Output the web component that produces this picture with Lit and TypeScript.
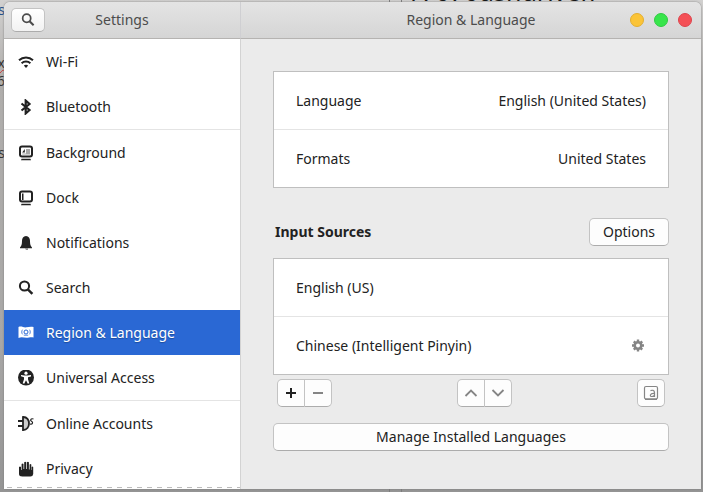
import { LitElement, html, css, svg, nothing } from "lit";
import { customElement, state } from "lit/decorators.js";

const icons = {
  wifi: svg`<path d="M1 6.200a10.200 10.200 0 0 1 14 0M3.600 9.200a6.500 6.500 0 0 1 8.800 0" fill="none" stroke="currentColor" stroke-width="2"/><path d="M5.800 11.600a3.600 3.600 0 0 1 4.400 0L8 14z"/>`,
  bluetooth: svg`<path d="M3.500 4.500l8 6.500-3.800 3.400V1.600L11.500 5l-8 6.500" fill="none" stroke="currentColor" stroke-width="2.200"/>`,
  background: svg`<rect x="2" y="1.500" width="12" height="10" rx="2" fill="#fff" stroke="currentColor" stroke-width="2"/><path d="M3.500 13.700h9l.5 1.600H3z"/><path d="M4.200 7.500h2.600V4z"/><path d="M8 4h4v5.500H4.200v-1H8z" opacity=".4"/>`,
  dock: svg`<rect x="2" y="1.500" width="12" height="10" rx="2" fill="#fff" stroke="currentColor" stroke-width="2"/><path d="M3.500 13.700h9l.5 1.600H3zM4 3.500h1.500V10H4z"/>`,
  bell: svg`<path d="M8 1C5.300 1 4 3.200 4 5.800 4 9.500 3.400 11 2 12.500v.7h12v-.7c-1.400-1.500-2-3-2-6.700C12 3.200 10.700 1 8 1zM7 13.800h3v.8H8z"/>`,
  search: svg`<circle cx="6.500" cy="6" r="4.600" fill="none" stroke="currentColor" stroke-width="2"/><path d="M9.800 9.300l4.600 4.600" fill="none" stroke="currentColor" stroke-width="2.400"/>`,
  flag: svg`<path d="M.5 2c3-1.200 5 .8 8 .3 2.500-.4 4-.8 7-.3v10.500c-3-.7-4.500.3-7 .3s-5-1.300-8 .2z"/><g fill="none" stroke="#2a68d4"><circle cx="8" cy="7" r="2"/><path d="M4.500 4.700c-1 1.200-1 3.400 0 4.600M11.500 4.700c1 1.200 1 3.400 0 4.600M5.800 10.200h4.400" stroke-width=".8"/></g>`,
  access: svg`<circle cx="8" cy="7.500" r="8"/><circle cx="8" cy="3.200" r="1.600" fill="#fff"/><path d="M3 5l3.500.5h3L13 5v1.400l-3 .9v2l1.300 4-1.500.5L8 10.200 6.200 13.700l-1.500-.5 1.300-4v-2l-3-.9z" fill="#fff"/>`,
  plug: svg`<path d="M0 4h5v2H0zM0 9h5v2H0z"/><path d="M5 1c8-.3 8 13.200 0 13z" fill="#ccc" stroke="currentColor" stroke-width="1.800"/><path d="M15.500 3c-3-1-3.500 1.500-2 2.300 2 1 1 3.500-1.500 2.700" fill="none" stroke="currentColor" stroke-width="1.200"/>`,
  hand: svg`<path d="M1 6q1-1 2 0v3h.6V3q1-1 1.900 0v5h.7V1.200q1-1 2 0V8h.7V1.200q1-1 2 0V8.500h.7V3.500q.9-1 1.700 0V9h.4V6q.8-.8 1.500 0v7q-.3 2.500-2.800 2.500h-8Q1 15.500 1 13z"/>`,
  plus: svg`<path d="M7 3h2v4h4v2H9v4H7V9H3V7h4z"/>`,
  minus: svg`<path d="M3 7h10v2H3z"/>`,
  up: svg`<path d="M2.500 11L8 5.500l5.500 5.500" fill="none" stroke="currentColor" stroke-width="1.800"/>`,
  down: svg`<path d="M2.500 5L8 10.500 13.500 5" fill="none" stroke="currentColor" stroke-width="1.800"/>`,
  gear: svg`<circle cx="8" cy="7.500" r="3.300" fill="none" stroke="currentColor" stroke-width="2.600"/><path d="M8 1.500v3M8 10.500v3M2 7.500h3M11 7.500h3M3.800 3.300l2 2M10.200 9.700l2 2M12.200 3.300l-2 2M5.800 9.700l-2 2" stroke="currentColor" stroke-width="2.400"/>`,
  keyboard: svg`<rect x="1.500" y="1.500" width="13" height="12.500" rx="1.500" fill="none" stroke="currentColor" stroke-width="1.200"/><path d="M2 13.500h12V15H2z"/><path d="M7.500 5.600C9 5 11.500 5 11.500 7.500V12M11.500 8.500C6.500 8 6.500 11.800 9 11.500c1.300 0 2.500-.8 2.500-2" fill="none" stroke="currentColor" stroke-width="1.200"/>`,
};

type IconName = keyof typeof icons;
const icon = (name: IconName) =>
  html`<svg class="icon" viewBox="0 0 16 16" aria-hidden="true">${icons[name]}</svg>`;

const groups: [IconName, string][][] = [
  [["wifi", "Wi-Fi"], ["bluetooth", "Bluetooth"]],
  [
    ["background", "Background"],
    ["dock", "Dock"],
    ["bell", "Notifications"],
    ["search", "Search"],
    ["flag", "Region & Language"],
    ["access", "Universal Access"],
  ],
  [["plug", "Online Accounts"], ["hand", "Privacy"]],
];

@customElement("app-root")
export class AppRoot extends LitElement {
  @state() private current = "Region & Language";

  static styles = css`
    :host {
      display: block;
      height: 100vh;
      box-sizing: border-box;
      padding: 2px 2px 3px 4px;
      overflow: hidden;
      position: relative;
      background: linear-gradient(#d2d1d0, #b0aeac 80px, #a8a7a6 70%, #949494);
      color: #222;
      font: 14px/20px "Noto Sans", "Open Sans", sans-serif;
    }
    * { box-sizing: border-box; }
    .behind {
      position: absolute;
      inset: 0;
      overflow: hidden;
      white-space: nowrap;
      color: #333;
    }
    .scrap { position: absolute; right: calc(100% - 5px); }
    .s1 { top: 0; color: #24508a; }
    .s2 { top: 53px; text-decoration: underline wavy #c33 1px; }
    .s3 { top: 71px; }
    .s4 { top: 143px; }
    .big {
      position: absolute;
      left: 412px;
      top: -25px;
      font-size: 25px;
      line-height: 32px;
      color: #111;
    }
    .gutter {
      position: absolute;
      inset: 0 auto 0 389px;
      width: 13px;
      border: solid #7d7d7d;
      border-width: 0 1px;
    }
    .window {
      position: relative;
      display: grid;
      grid-template: 37px minmax(0, 1fr) / 237px minmax(0, 1fr);
      height: 100%;
      overflow: hidden;
      border-radius: 6px 6px 0 0;
      background: #ebebeb;
      box-shadow: 0 0 2px #777;
    }
    header {
      display: grid;
      align-items: center;
      border-bottom: 1px solid #b5b3b1;
      background: linear-gradient(#e4e4e4, #d5d5d5);
      color: #4c4c4c;
    }
    .left-head {
      grid-template-columns: 34px 1fr 34px;
      padding: 0 7px;
      border-right: 1px solid #cfcfd2;
    }
    .right-head { grid-template-columns: 71px 1fr 71px; }
    h1, h2 { margin: 0; font-size: 14px; }
    h1 { font-weight: 400; text-align: center; }
    .icon { display: block; width: 16px; height: 16px; fill: currentColor; flex: none; }
    button {
      display: flex;
      align-items: center;
      justify-content: center;
      height: 28px;
      margin: 0;
      padding: 0 13px;
      border: 1px solid #c3c3c3;
      border-bottom-color: #acacac;
      border-radius: 5px;
      background: #fdfdfd;
      color: inherit;
      font: inherit;
    }
    .find { height: 24px; padding: 0; background: linear-gradient(#fff, #f2f2f2); }
    .find .icon { width: 14px; height: 14px; }
    .dots { display: flex; gap: 10px; }
    .dot { width: 14px; height: 14px; padding: 0; border-radius: 50%; }
    .min { background: #fbc437; border-color: #e3ae30; }
    .max { background: #38e54b; border-color: #30cb42; }
    .close { background: #f45056; border-color: #dd444c; }
    .side {
      overflow: hidden;
      border-right: 1px solid #d3d3d3;
      background: #fff;
      position: relative;
    }
    .side::after {
      content: "";
      position: absolute;
      inset: auto 0 1px 3px;
      height: 1px;
      background: repeating-linear-gradient(90deg, #bbb 0 5px, transparent 5px 10px);
    }
    ul { margin: 0; padding: 0; list-style: none; }
    .side ul + ul { border-top: 1px solid #e4e4e4; }
    .item {
      display: flex;
      align-items: center;
      gap: 12px;
      height: 45px;
      padding: 0 14px;
      color: inherit;
      text-decoration: none;
    }
    .item.on { background: #2a68d4; color: #fff; text-shadow: 0 1px 1px #1c4c9c; }
    main { padding: 32px; overflow: hidden; }
    .card { border: 1px solid #bfbfbf; background: #fff; }
    .row {
      display: flex;
      align-items: center;
      justify-content: space-between;
      height: 57px;
      padding: 0 22px;
    }
    li + .row { height: 58px; border-top: 1px solid #e4e4e4; }
    .title {
      display: flex;
      align-items: center;
      justify-content: space-between;
      margin: 30px 0 12px;
      padding-left: 2px;
    }
    .plain { height: 16px; padding: 0; border: 0; background: none; color: #858585; }
    .bar {
      display: flex;
      justify-content: space-between;
      padding: 4px 4px 16px;
    }
    .pair { display: flex; }
    .tool { width: 28px; padding: 0; }
    .pair .tool:first-child { border-radius: 5px 0 0 5px; }
    .pair .tool:last-child { margin-left: -1px; border-radius: 0 5px 5px 0; }
    .dim { color: #858585; }
    .wide { width: 100%; }
  `;

  private pick(e: Event, name: string) {
    e.preventDefault();
    this.current = name;
  }

  render() {
    return html`
      <div class="behind" aria-hidden="true">
        <span class="scrap s1">as</span><span class="scrap s2">x</span>
        <span class="scrap s3">6</span><span class="scrap s4">s</span>
        <span class="gutter"></span>
        <span class="big">/7070ushurlver/</span>
      </div>
      <div class="window">
        <header class="left-head">
          <button class="find" aria-label="Search settings">${icon("search")}</button>
          <h1>Settings</h1>
        </header>
        <header class="right-head">
          <span></span>
          <h1>Region &amp; Language</h1>
          <div class="dots">
            <button class="dot min" aria-label="Minimize"></button>
            <button class="dot max" aria-label="Maximize"></button>
            <button class="dot close" aria-label="Close"></button>
          </div>
        </header>
        <nav class="side">
          ${groups.map((g) => html`<ul>
            ${g.map(([i, name]) => html`<li>
              <a href="#" class="item ${name === this.current ? "on" : ""}"
                aria-current=${name === this.current ? "page" : nothing}
                @click=${(e: Event) => this.pick(e, name)}>${icon(i)}<span>${name}</span></a>
            </li>`)}
          </ul>`)}
        </nav>
        <main>
          <ul class="card">
            <li class="row"><span>Language</span><span>English (United States)</span></li>
            <li class="row"><span>Formats</span><span>United States</span></li>
          </ul>
          <div class="title"><h2>Input Sources</h2><button>Options</button></div>
          <ul class="card">
            <li class="row">English (US)</li>
            <li class="row">Chinese (Intelligent Pinyin)
              <button class="plain" aria-label="Preferences">${icon("gear")}</button></li>
          </ul>
          <div class="bar">
            <div class="pair">
              <button class="tool" aria-label="Add">${icon("plus")}</button>
              <button class="tool dim" aria-label="Remove">${icon("minus")}</button>
            </div>
            <div class="pair">
              <button class="tool dim" aria-label="Move up">${icon("up")}</button>
              <button class="tool dim" aria-label="Move down">${icon("down")}</button>
            </div>
            <button class="tool dim" aria-label="Show layout">${icon("keyboard")}</button>
          </div>
          <button class="wide">Manage Installed Languages</button>
        </main>
      </div>
    `;
  }
}
